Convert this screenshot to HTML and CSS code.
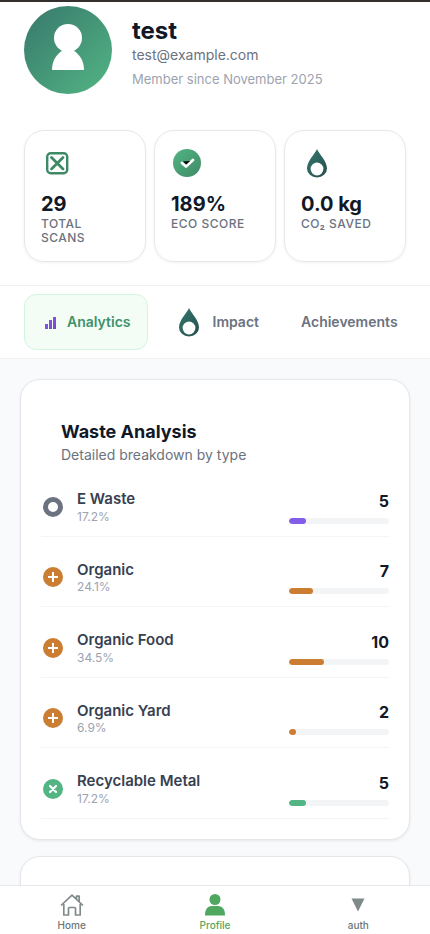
FILE: index.html
```html
<!DOCTYPE html>
<html lang="en">
<head>
<meta charset="utf-8">
<meta name="viewport" content="width=device-width, initial-scale=1">
<title>Profile</title>
<link rel="stylesheet" href="styles.css">
</head>
<body>
<svg class="defs" aria-hidden="true">
  <defs>
    <linearGradient id="green" x1="0" y1="0" x2="1" y2="1"><stop offset="0" stop-color="#52b583"/><stop offset="1" stop-color="#3f8a66"/></linearGradient>
    <linearGradient id="teal" x1="0" y1="0" x2="1" y2="1"><stop offset="0" stop-color="#34786c"/><stop offset="1" stop-color="#264f4f"/></linearGradient>
    <linearGradient id="violet" x1="0" y1="0" x2="1" y2="1"><stop offset="0" stop-color="#8b5cf6"/><stop offset="1" stop-color="#7448c4"/></linearGradient>
    <symbol id="drop" viewBox="0 0 32 32"><path d="M16 2C18 7 26 14 26 21.500A10 9 0 0 1 6 21.500C6 14 14 7 16 2Z" fill="url(#teal)"/><circle cx="16" cy="22" r="6.400" fill="#fff"/></symbol>
    <symbol id="plus" viewBox="0 0 20 20"><circle cx="10" cy="10" r="10" fill="#cb7d31"/><path d="M10 5v10M5 10h10" stroke="#fff" stroke-width="2"/></symbol>
  </defs>
</svg>
<div class="app">
  <main class="content">
    <header class="profile">
      <div class="identity">
        <div class="avatar">
          <svg viewBox="0 0 88 88" aria-hidden="true"><circle cx="44" cy="32" r="14"/><path d="M28 64c0-10 5-16 11-20h10c6 4 11 10 11 20Z"/></svg>
        </div>
        <div class="who">
          <h1>test</h1>
          <p class="email">test@example.com</p>
          <p class="since">Member since November 2025</p>
        </div>
      </div>
      <div class="stats">
        <section class="stat">
          <svg class="stat-icon" viewBox="0 0 32 32" fill="none" stroke="#3f8a66" stroke-width="2.400" stroke-linecap="round" aria-hidden="true"><rect x="6.200" y="6.200" width="20" height="20" rx="3.500"/><path d="M10.500 10.500l11.500 11.500M22 10.500L10.500 22" stroke-width="2.800"/></svg>
          <strong>29</strong><span>Total Scans</span>
        </section>
        <section class="stat">
          <svg class="stat-icon" viewBox="0 0 32 32" aria-hidden="true"><circle cx="16" cy="16" r="14" fill="url(#green)"/><path d="M11 16l4 3.500 7-6.500" fill="none" stroke="#fff" stroke-width="2.800" stroke-linecap="round" stroke-linejoin="round"/><path d="M12 14.500l3.300 3 3.800-3.500Z"/></svg>
          <strong>189%</strong><span>Eco Score</span>
        </section>
        <section class="stat">
          <svg class="stat-icon" aria-hidden="true"><use href="#drop"/></svg>
          <strong>0.0 kg</strong><span>CO₂ Saved</span>
        </section>
      </div>
    </header>
    <nav class="tabs" aria-label="Profile sections">
      <button class="tab active" type="button"><svg class="bars" viewBox="0 0 18 18" fill="url(#violet)" aria-hidden="true"><path d="M4 11h3v5H4ZM8 7h3v9H8ZM12 4h3v12h-3Z"/></svg>Analytics</button>
      <button class="tab" type="button"><svg class="tab-drop" aria-hidden="true"><use href="#drop"/></svg>Impact</button>
      <button class="tab" type="button">Achievements</button>
    </nav>
    <div class="panels">
      <section class="card">
        <header class="card-head"><h2>Waste Analysis</h2><p>Detailed breakdown by type</p></header>
        <ul class="list">
          <li><svg class="kind" viewBox="0 0 20 20" aria-hidden="true"><circle cx="10" cy="10" r="7.500" fill="#fff" stroke="#6b7280" stroke-width="5"/></svg>
            <div class="info"><h3>E Waste</h3><p>17.2%</p></div><div class="amount"><b>5</b><div class="track"><div class="fill violet" style="width:17.2%"></div></div></div></li>
          <li><svg class="kind" aria-hidden="true"><use href="#plus"/></svg>
            <div class="info"><h3>Organic</h3><p>24.1%</p></div><div class="amount"><b>7</b><div class="track"><div class="fill orange" style="width:24.1%"></div></div></div></li>
          <li><svg class="kind" aria-hidden="true"><use href="#plus"/></svg>
            <div class="info"><h3>Organic Food</h3><p>34.5%</p></div><div class="amount"><b>10</b><div class="track"><div class="fill orange" style="width:34.5%"></div></div></div></li>
          <li><svg class="kind" aria-hidden="true"><use href="#plus"/></svg>
            <div class="info"><h3>Organic Yard</h3><p>6.9%</p></div><div class="amount"><b>2</b><div class="track"><div class="fill orange" style="width:6.9%"></div></div></div></li>
          <li><svg class="kind" viewBox="0 0 20 20" aria-hidden="true"><circle cx="10" cy="10" r="10" fill="#52b583"/><path d="M7 7l6 6M13 7l-6 6" stroke="#fff" stroke-width="2.200" stroke-linecap="round"/></svg>
            <div class="info"><h3>Recyclable Metal</h3><p>17.2%</p></div><div class="amount"><b>5</b><div class="track"><div class="fill green" style="width:17.2%"></div></div></div></li>
        </ul>
      </section>
      <section class="card next"></section>
    </div>
  </main>
  <nav class="bottom" aria-label="Main">
    <a href="#home"><svg viewBox="0 0 24 24" fill="none" stroke="#808a8a" stroke-width="1.700" stroke-linejoin="round" stroke-linecap="round" aria-hidden="true"><path d="M1.500 12L12 2.200 22.500 12M3.800 11.500V22H8.500v-6.500q0-1 1-1h5q1 0 1 1V22h4.700V11.500M16.500 5.500V3.200h2.700v5"/></svg>Home</a>
    <a href="#profile" class="current" aria-current="page"><svg viewBox="0 0 24 24" fill="#50a860" aria-hidden="true"><circle cx="12" cy="6.500" r="5.500"/><path d="M2 22c0-6 3-9 7-9h6c4 0 7 3 7 9q0 .5-.5.5h-19Q2 22.500 2 22Z"/></svg>Profile</a>
    <a href="#auth"><svg viewBox="0 0 24 24" fill="#808a8a" aria-hidden="true"><path d="M5.500 5.500h13L12 18.500Z"/></svg>auth</a>
  </nav>
</div>
</body>
</html>
```
FILE: styles.css
```css
* { box-sizing: border-box; }
body { margin: 0; font-family: Inter, "Liberation Sans", sans-serif; color: #111827; background: #f8fafc; }
h1, h2, h3, p, ul { margin: 0; padding: 0; }
.defs { position: absolute; width: 0; height: 0; }
.app { height: 100vh; display: flex; flex-direction: column; border-top: 2px solid #33302e; }
.content { flex: 1; min-height: 0; overflow-y: auto; scrollbar-width: none; }

.profile { background: #fff; padding: 4px 24px 23px; border-bottom: 1px solid #f0f1f3; }
.identity { display: flex; align-items: center; gap: 20px; margin-bottom: 36px; }
.avatar { flex: none; width: 88px; height: 88px; border-radius: 50%; background: linear-gradient(135deg, #38786c, #52b583); }
.avatar svg { display: block; width: 88px; height: 88px; fill: #fff; }
.who { padding-top: 6px; }
h1 { font-size: 24px; line-height: 28px; font-weight: 700; }
.email { font-size: 14px; line-height: 20px; color: #6b7280; }
.since { font-size: 13px; line-height: 20px; margin-top: 4px; color: #9ca3af; }

.stats { display: grid; grid-template-columns: repeat(3, 1fr); gap: 8px; }
.stat { display: flex; flex-direction: column; min-height: 132px; padding: 16px; border: 1px solid #e5e7eb; border-radius: 20px; box-shadow: 0 1px 3px rgba(0, 0, 0, .06); }
.stat-icon { width: 32px; height: 32px; margin-bottom: 12px; }
.stat strong { font-size: 20px; line-height: 26px; font-weight: 700; }
.stat span { font-size: 12px; line-height: 14px; font-weight: 500; letter-spacing: 0.5px; text-transform: uppercase; color: #6b7280; }

.tabs { display: flex; gap: 8px; padding: 8px 24px; background: #fff; border-bottom: 1px solid #f0f1f3; }
.tab { display: flex; align-items: center; gap: 8px; height: 56px; padding: 12px 16px; border: 1px solid transparent; border-radius: 12px; background: none; font: 600 14px/20px Inter, "Liberation Sans", sans-serif; color: #6b7280; }
.tab.active { background: #f3fdf6; border-color: #d1f5df; color: #40916c; }
.bars { flex: none; width: 18px; height: 18px; }
.tab-drop { flex: none; width: 32px; height: 32px; }

.panels { display: flex; flex-direction: column; gap: 16px; padding: 20px; }
.card { background: #fff; border: 1px solid #e5e7eb; border-radius: 20px; padding: 20px; box-shadow: 0 1px 3px rgba(0, 0, 0, .08); }
.card.next { min-height: 300px; }
.card-head { padding: 20px 20px 1px; }
h2 { font-size: 18px; line-height: 24px; font-weight: 700; }
.card-head p { font-size: 14px; line-height: 20px; margin-top: 1px; color: #6b7280; }
.list { list-style: none; }
.list li { display: flex; align-items: center; gap: 12px; padding: 23px 0 11px; border-bottom: 1px solid #f3f4f6; }
.kind { flex: none; width: 24px; height: 20px; }
.info { flex: 1; }
h3 { font-size: 15px; line-height: 1.3; font-weight: 600; color: #374151; }
.info p { font-size: 12px; line-height: 16px; color: #9ca3af; }
.amount { width: 100px; display: flex; flex-direction: column; gap: 6px; text-align: right; }
.amount b { font-size: 16px; line-height: 22px; font-weight: 700; }
.track { height: 6px; border-radius: 3px; background: #f3f4f6; overflow: hidden; }
.fill { height: 6px; border-radius: 3px; }
.violet { background: #835de8; }
.orange { background: #cb7d31; }
.green { background: #52b583; }

.bottom { flex: none; display: grid; grid-template-columns: repeat(3, 1fr); background: #fff; border-top: 1px solid #e5e7eb; padding: 7px 0 2px; }
.bottom a { display: flex; flex-direction: column; align-items: center; gap: 1px; font-size: 10px; line-height: 14px; font-weight: 500; color: #6c7676; text-decoration: none; }
.bottom a.current { color: #50a860; }
.bottom svg { width: 24px; height: 24px; }
```
